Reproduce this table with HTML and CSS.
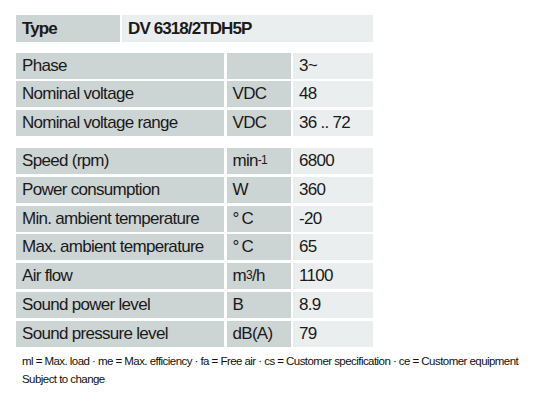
FILE: index.html
```html
<!DOCTYPE html>
<html>
<head>
<meta charset="utf-8">
<link rel="stylesheet" href="styles.css">
</head>
<body>
<div class="sheet">
  <div class="type-row">
    <div class="cell dark bold">Type</div>
    <div class="cell light bold">DV 6318/2TDH5P</div>
  </div>

  <div class="group">
    <div class="cell dark">Phase</div><div class="cell dark"></div><div class="cell light">3~</div>
    <div class="cell dark">Nominal voltage</div><div class="cell dark">VDC</div><div class="cell light">48</div>
    <div class="cell dark">Nominal voltage range</div><div class="cell dark">VDC</div><div class="cell light">36 .. 72</div>
  </div>

  <div class="group second">
    <div class="cell dark">Speed (rpm)</div><div class="cell dark">min<sup>-1</sup></div><div class="cell light">6800</div>
    <div class="cell dark">Power consumption</div><div class="cell dark">W</div><div class="cell light">360</div>
    <div class="cell dark">Min. ambient temperature</div><div class="cell dark"><span class="deg">°</span>C</div><div class="cell light">-20</div>
    <div class="cell dark">Max. ambient temperature</div><div class="cell dark"><span class="deg">°</span>C</div><div class="cell light">65</div>
    <div class="cell dark">Air flow</div><div class="cell dark">m<sup>3</sup>/h</div><div class="cell light">1100</div>
    <div class="cell dark">Sound power level</div><div class="cell dark">B</div><div class="cell light">8.9</div>
    <div class="cell dark">Sound pressure level</div><div class="cell dark">dB(A)</div><div class="cell light">79</div>
  </div>

  <div class="notes">
    <p>ml = Max. load · me = Max. efficiency · fa = Free air · cs = Customer specification · ce = Customer equipment</p>
    <p>Subject to change</p>
  </div>
</div>
</body>
</html>
```

FILE: styles.css
```css
html, body {
  margin: 0;
  padding: 0;
  background: #ffffff;
}

.sheet {
  padding: 15px 0 0 16px;
  font-family: "Liberation Sans", Arial, sans-serif;
  color: #1a1a1a;
}

.type-row {
  display: grid;
  grid-template-columns: 104px 251px;
  column-gap: 2px;
  height: 27px;
}

.group {
  display: grid;
  grid-template-columns: 208px 64px 80px;
  column-gap: 2.5px;
  row-gap: 2.8px;
  grid-auto-rows: 26px;
  margin-top: 10.5px;
  width: 357px;
}

.group.second {
  margin-top: 12px;
}

.cell {
  display: flex;
  align-items: center;
  padding-left: 6px;
  font-size: 17px;
  letter-spacing: -0.7px;
  white-space: nowrap;
}

.dark {
  background: #cdd4d4;
}

.light {
  background: #eaeeee;
}

.bold {
  font-weight: bold;
  letter-spacing: -0.9px;
  font-size: 17px;
}

sup {
  font-size: 12px;
  line-height: 0;
  position: relative;
  top: -1px;
  vertical-align: super;
}

.deg {
  margin-right: 3px;
}

.notes {
  margin-top: 5px;
  padding-left: 6px;
  font-size: 11.5px;
  letter-spacing: -0.55px;
  color: #111;
}

.notes p {
  margin: 0;
  line-height: 18px;
}
```
